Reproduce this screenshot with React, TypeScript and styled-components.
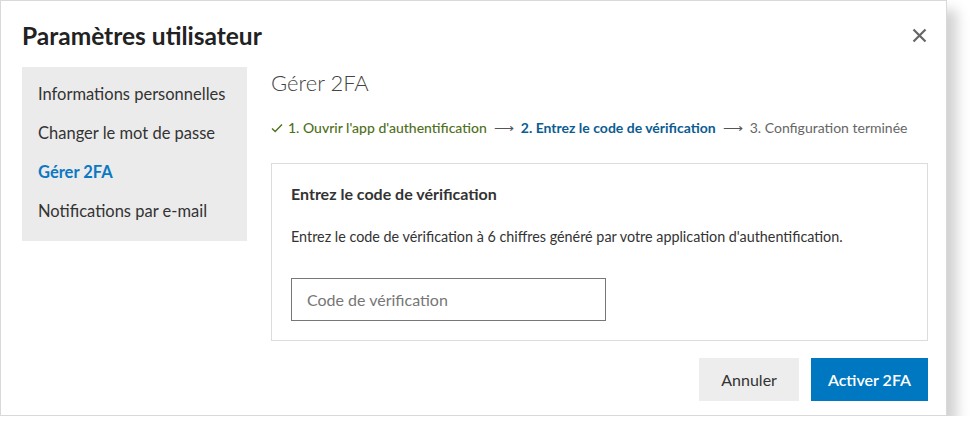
import React from "react";
import styled, { createGlobalStyle } from "styled-components";

const Global = createGlobalStyle`
  html, body { margin: 0; padding: 0; background: #ffffff; }
  body { font-family: "Lato", "Open Sans", sans-serif; color: #333; }
  * { box-sizing: border-box; }
`;

const Dialog = styled.div`
  width: 947px;
  height: 416px;
  background: #fff;
  border: 1px solid #d9d9d9;
  box-shadow: 10px 10px 12px rgba(0, 0, 0, 0.18);
  padding: 20px 18px 13px 21px;
  display: flex;
  flex-direction: column;
`;

const Header = styled.div`
  display: flex;
  align-items: center;
  justify-content: space-between;
  height: 30px;
  margin-bottom: 16px;
`;

const Title = styled.h1`
  margin: 0;
  font-size: 24.5px;
  font-weight: 700;
  color: #222;
  line-height: 30px;
`;

const CloseButton = styled.button`
  border: 0;
  background: transparent;
  padding: 0;
  width: 16px;
  height: 16px;
  margin-right: 1px;
  margin-top: -2px;
  display: flex;
  align-items: center;
  justify-content: center;
  cursor: pointer;
`;

const Body = styled.div`
  display: flex;
  gap: 24px;
  align-items: flex-start;
`;

const Sidebar = styled.nav`
  width: 225px;
  flex: none;
  background: #ebebeb;
  padding: 8px 0 10px;
  display: flex;
  flex-direction: column;
`;

const NavItem = styled.a<{ $active?: boolean }>`
  display: block;
  height: 39px;
  line-height: 39px;
  padding: 0 16px;
  font-size: 16.5px;
  font-weight: ${(p) => (p.$active ? 700 : 400)};
  color: ${(p) => (p.$active ? "#0a78c2" : "#333")};
  text-decoration: none;
  white-space: nowrap;
`;

const Content = styled.div`
  flex: 1;
  display: flex;
  flex-direction: column;
`;

const PageTitle = styled.h2`
  margin: 0;
  font-size: 22px;
  font-weight: 300;
  line-height: 32px;
  color: #444;
`;

const Steps = styled.div`
  margin-top: 19px;
  display: flex;
  align-items: center;
  font-size: 14px;
  line-height: 20px;
  white-space: nowrap;
`;

const Step = styled.span<{ $state: "done" | "current" | "todo" }>`
  color: ${(p) =>
    p.$state === "done" ? "#4f6f1c" : p.$state === "current" ? "#0b5c92" : "#666"};
  font-weight: ${(p) => (p.$state === "todo" ? 400 : p.$state === "current" ? 700 : 500)};
  display: inline-flex;
  align-items: center;
  gap: 5px;
`;

const Arrow = styled.span`
  color: #555;
  margin: 0 7px;
  font-size: 14px;
`;

const Card = styled.section`
  margin-top: 25px;
  border: 1px solid #dcdcdc;
  padding: 19px;
  display: flex;
  flex-direction: column;
  align-items: flex-start;
`;

const CardTitle = styled.h3`
  margin: 0;
  font-size: 16px;
  font-weight: 700;
  line-height: 22px;
  color: #333;
`;

const CardText = styled.p`
  margin: 22px 0 0;
  font-size: 14.35px;
  line-height: 20px;
  color: #333;
`;

const CodeInput = styled.input`
  margin-top: 31px;
  width: 315px;
  height: 43px;
  border: 1px solid #777;
  border-radius: 0;
  padding: 0 15px;
  font-family: inherit;
  font-size: 16px;
  color: #333;
  outline: none;
  &::placeholder { color: #767676; }
`;

const Footer = styled.div`
  margin-top: 17px;
  display: flex;
  justify-content: flex-end;
  gap: 12px;
`;

const Button = styled.button<{ $primary?: boolean }>`
  height: 43px;
  border: 0;
  padding: 0 ${(p) => (p.$primary ? 17 : 22)}px;
  font-family: inherit;
  font-size: 16px;
  font-weight: ${(p) => (p.$primary ? 600 : 400)};
  background: ${(p) => (p.$primary ? "#0078c1" : "#ededed")};
  color: ${(p) => (p.$primary ? "#fff" : "#333")};
  cursor: pointer;
`;

export default function App() {
  return (
    <>
      <Global />
      <Dialog role="dialog" aria-label="Paramètres utilisateur">
        <Header>
          <Title>Paramètres utilisateur</Title>
          <CloseButton aria-label="Fermer">
            <svg width="15" height="15" viewBox="0 0 15 15">
              <path d="M1.5 1.5 L13.5 13.5 M13.5 1.5 L1.5 13.5" stroke="#666" strokeWidth="2.2" fill="none" />
            </svg>
          </CloseButton>
        </Header>
        <Body>
          <Sidebar>
            <NavItem>Informations personnelles</NavItem>
            <NavItem>Changer le mot de passe</NavItem>
            <NavItem $active>Gérer 2FA</NavItem>
            <NavItem>Notifications par e-mail</NavItem>
          </Sidebar>
          <Content>
            <PageTitle>Gérer 2FA</PageTitle>
            <Steps>
              <Step $state="done">
                <svg width="12" height="10" viewBox="0 0 12 10">
                  <path d="M1 5.5 L4.2 8.5 L11 1.5" stroke="#4f6f1c" strokeWidth="1.4" fill="none" />
                </svg>
                1. Ouvrir l'app d'authentification
              </Step>
              <Arrow>⟶</Arrow>
              <Step $state="current">2. Entrez le code de vérification</Step>
              <Arrow>⟶</Arrow>
              <Step $state="todo">3. Configuration terminée</Step>
            </Steps>
            <Card>
              <CardTitle>Entrez le code de vérification</CardTitle>
              <CardText>
                Entrez le code de vérification à 6 chiffres généré par votre application d'authentification.
              </CardText>
              <CodeInput placeholder="Code de vérification" />
            </Card>
            <Footer>
              <Button>Annuler</Button>
              <Button $primary>Activer 2FA</Button>
            </Footer>
          </Content>
        </Body>
      </Dialog>
    </>
  );
}
